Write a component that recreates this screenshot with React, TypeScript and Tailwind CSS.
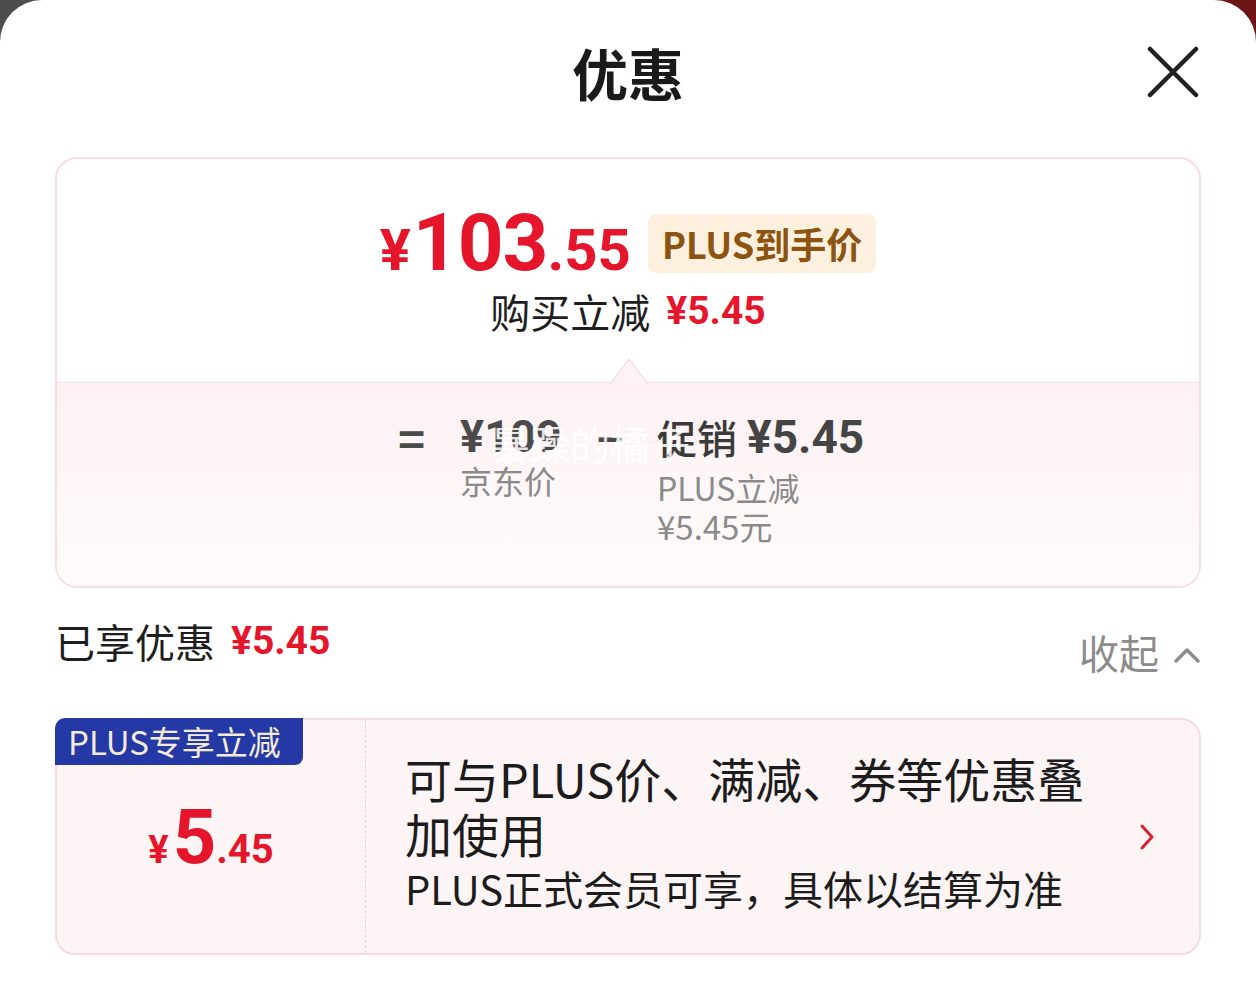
import React from "react";

const cjk = "font-['Noto_Sans_CJK_SC','Noto_Sans',sans-serif]";
const num = "font-['Roboto','Noto_Sans_CJK_SC',sans-serif]";

function CloseIcon() {
  return (
    <svg width="52" height="52" viewBox="0 0 52 52" fill="none">
      <path d="M3 3 L49 49 M49 3 L3 49" stroke="#1f1f1f" strokeWidth="4.5" strokeLinecap="round" />
    </svg>
  );
}

function Notch() {
  return (
    <svg width="40" height="26" viewBox="0 0 40 26" className="absolute left-[552px] -top-[25px]">
      <path d="M1 26 L20 1 L39 26" fill="#fdf2f4" stroke="#f8e1e6" strokeWidth="1.5" />
    </svg>
  );
}

export default function App() {
  return (
    <div className={`w-[1256px] h-[1000px] bg-gradient-to-r from-[#4d4d4d] via-[#5a2a2a] to-[#6e1414] ${cjk}`}>
      <div className="relative h-full bg-white rounded-t-[42px] px-[55px]">
        {/* Header */}
        <div className="relative h-[144px] flex items-center justify-center">
          <h1 className="text-[56px] leading-[68px] font-bold text-[#1a1a1a]">优惠</h1>
          <button className="absolute right-[2px] top-[46px]">
            <CloseIcon />
          </button>
        </div>

        {/* Price summary card */}
        <div className="mt-[13px] h-[431px] border-2 border-[#f9dce2] rounded-[22px] overflow-hidden flex flex-col">
          <div className="h-[223px] flex flex-col items-center pt-[49px]">
            <div className="flex items-center h-[70px]">
              <div className={`flex items-baseline text-[#e5162b] font-bold ${num}`}>
                <span className="text-[58px] leading-none mr-[2px]">¥</span>
                <span className="text-[80px] leading-none tracking-[-1px]">103</span>
                <span className="text-[58px] leading-none">.55</span>
              </div>
              <div className="ml-[17px] h-[59px] px-[14px] rounded-[8px] bg-[#fdf0df] flex items-center">
                <span className="text-[36px] font-bold text-[#8c5410] leading-none">PLUS到手价</span>
              </div>
            </div>
            <div className="mt-[9px] flex items-center h-[48px]">
              <span className="text-[40px] text-[#1e1e1e] leading-none">购买立减</span>
              <span className={`ml-[16px] text-[39px] font-bold text-[#e5162b] leading-none ${num}`}>¥5.45</span>
            </div>
          </div>

          <div className="relative flex-1 border-t border-[#f8e1e6] bg-gradient-to-b from-[#fdf1f3] to-[#fffbfb]">
            <Notch />
            <div className="flex pl-[341px] pt-[30px]">
              <div className="w-[62px] text-[46px] leading-[48px] font-bold text-[#4a4a4a]">=</div>
              <div className="w-[137px]">
                <div className={`text-[45px] leading-[48px] font-bold text-[#4b4b4b] ${num}`}>¥109</div>
                <div className="text-[32px] leading-[38px] text-[#8a8a8a]">京东价</div>
              </div>
              <div className="w-[60px] text-[44px] leading-[48px] font-bold text-[#4a4a4a]">−</div>
              <div className="w-[212px]">
                <div className="flex items-center h-[48px]">
                  <span className="text-[40px] leading-none font-medium text-[#3a3a3a]">促销</span>
                  <span className={`ml-[10px] text-[46px] leading-none font-bold text-[#444] ${num}`}>¥5.45</span>
                </div>
                <div className="mt-[7px] text-[32px] leading-[38px] text-[#8a8a8a]">PLUS立减</div>
                <div className="text-[33px] leading-[40px] text-[#8a8a8a]">¥5.45元</div>
              </div>
            </div>
            {/* watermark */}
            <div className="absolute left-[433px] top-[40px] text-[40px] leading-none text-white/85 pointer-events-none">
              暴躁的橘子
            </div>
          </div>
        </div>

        {/* Enjoyed discounts row */}
        <div className="mt-[29px] flex justify-between items-start">
          <div className="flex items-center h-[48px]">
            <span className="text-[40px] leading-none text-[#1e1e1e]">已享优惠</span>
            <span className={`ml-[16px] text-[39px] font-bold leading-none text-[#e5162b] ${num}`}>¥5.45</span>
          </div>
          <div className="mt-[11px] flex items-center h-[48px]">
            <span className="text-[40px] leading-none text-[#8c8c8c]">收起</span>
            <svg width="28" height="18" viewBox="0 0 28 18" className="ml-[14px] mt-[6px]">
              <path d="M3 15 L14 4 L25 15" fill="none" stroke="#8c8c8c" strokeWidth="3.5" strokeLinecap="round" strokeLinejoin="round" />
            </svg>
          </div>
        </div>

        {/* PLUS coupon card */}
        <div className="relative mt-[42px] h-[237px] border-2 border-[#f7d9df] bg-[#fdf4f5] rounded-[20px] flex">
          <div className="absolute -left-[2px] -top-[2px] w-[248px] h-[47px] bg-[#2438a6] rounded-tl-[10px] rounded-br-[8px] flex items-center pl-[13px]">
            <span className="text-[33px] leading-none text-[#f4ebd6]">PLUS专享立减</span>
          </div>
          <div className="w-[309px] border-r border-dashed border-[#ead3d7] flex items-center justify-center">
            <div className={`flex items-baseline text-[#e5162b] font-bold ${num}`}>
              <span className="text-[38px] leading-none mr-[4px]">¥</span>
              <span className="text-[76px] leading-none">5</span>
              <span className="text-[40px] leading-none">.45</span>
            </div>
          </div>
          <div className="flex-1 flex items-center pl-[39px] pr-[43px]">
            <div className="w-[690px] text-[#1c1c1c] -mt-[6px]">
              <div className="text-[47px] leading-[55px]">可与PLUS价、满减、券等优惠叠加使用</div>
              <div className="text-[40px] leading-[57px]">PLUS正式会员可享，具体以结算为准</div>
            </div>
            <svg width="18" height="28" viewBox="0 0 18 28" className="ml-auto">
              <path d="M4 3 L14 14 L4 25" fill="none" stroke="#d9232f" strokeWidth="3" strokeLinecap="round" strokeLinejoin="round" />
            </svg>
          </div>
        </div>
      </div>
    </div>
  );
}
